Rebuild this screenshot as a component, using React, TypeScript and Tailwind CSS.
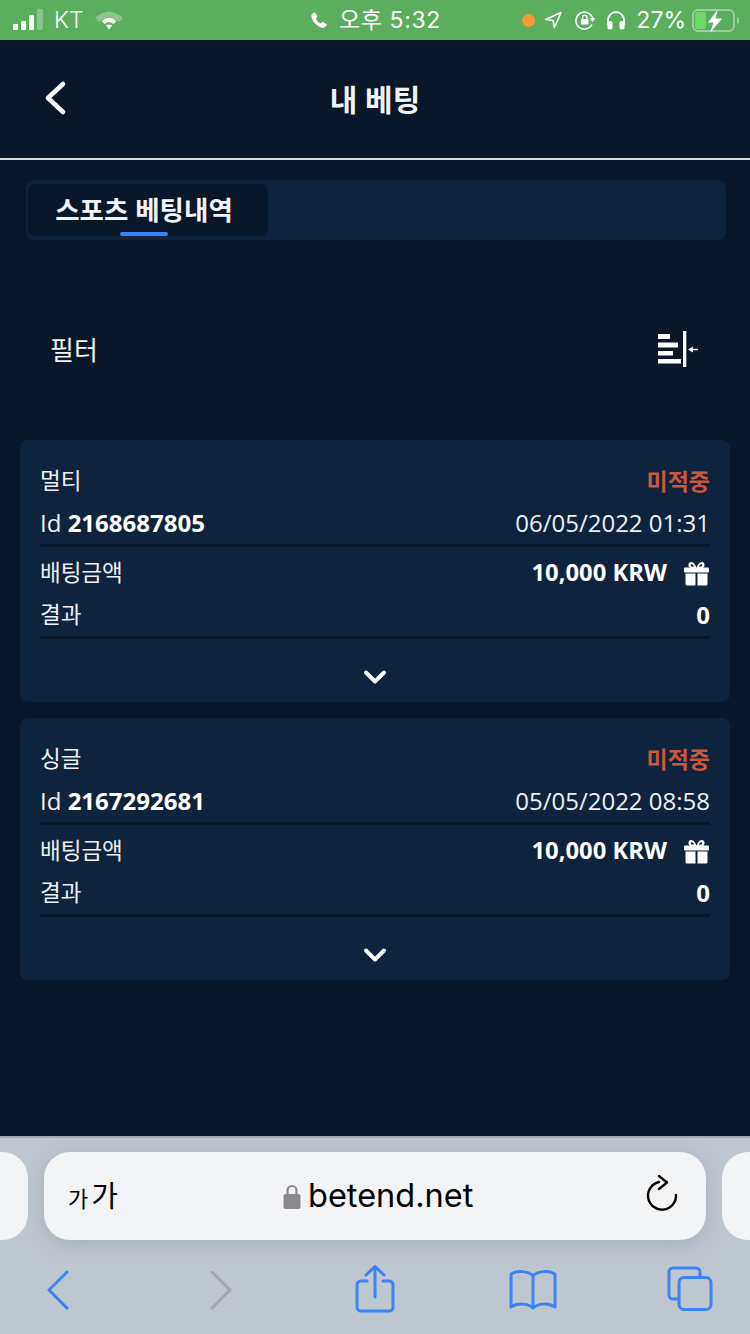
import { ChevronDown } from "lucide-react";

const sans = "font-['Open_Sans','Noto_Sans_CJK_KR',sans-serif]";
const ios = "font-['Inter','Noto_Sans_CJK_KR',sans-serif]";

const bets = [
  { type: "멀티", id: "2168687805", date: "06/05/2022 01:31" },
  { type: "싱글", id: "2167292681", date: "05/05/2022 08:58" },
];

function StatusBar() {
  return (
    <div className={`${ios} h-10 bg-[#5aae5c] flex items-center text-white shrink-0 relative`}>
      <div className="flex items-end gap-[3px] ml-[13px] mb-[1px]">
        <div className="w-[5px] h-[6px] bg-white rounded-[1px]" />
        <div className="w-[5px] h-[9px] bg-white rounded-[1px]" />
        <div className="w-[5px] h-[15px] bg-white rounded-[1px]" />
        <div className="w-[6px] h-[21px] bg-white/30 rounded-[2px]" />
      </div>
      <span className="ml-[11px] text-[23px] leading-none font-light">KT</span>
      <svg width="30" height="22" viewBox="0 0 30 22" className="ml-[10px]">
        <path d="M1 9 Q15 -4 29 9 L25 13 Q15 4 5 13 Z" fill="#fff" fillOpacity="0.3" />
        <path d="M7.5 12 Q15 5.5 22.500 12 L19.500 15 Q15 11.500 10.500 15 Z" fill="#fff" />
        <path d="M12 16.500 Q15 14.500 18 16.500 L15 20.500 Z" fill="#fff" />
      </svg>

      <div className="absolute left-[310px] top-0 h-10 flex items-center">
        <svg width="18" height="18" viewBox="0 0 24 24" fill="#fff">
          <path d="M6.600 1.500 L10 7.500 L7.800 10 C9 13 11 15.200 14.200 16.500 L16.800 14.200 L22.500 17.800 C21.500 21 19.500 22.800 17 22.500 C9 21 3 14 1.800 7 C1.500 4.500 3.500 2.300 6.600 1.500 Z" />
        </svg>
        <span className="ml-[11px] text-[23px] leading-none tracking-[0.6px]">오후 5:32</span>
      </div>

      <div className="absolute right-0 top-0 h-10 flex items-center">
        <div className="w-[13px] h-[13px] rounded-full bg-[#f29b38]" />
        <svg width="18" height="18" viewBox="0 0 18 18" fill="none" stroke="#fff" strokeWidth="1.500" strokeLinejoin="round" className="ml-[9px]">
          <path d="M17 1.500 L1.500 8.500 L9 9.500 L10.500 16.500 Z" />
        </svg>
        <svg width="22" height="22" viewBox="0 0 22 22" fill="none" className="ml-[12px]">
          <path d="M18.500 9 A8.500 8.500 0 1 0 18 15.500" stroke="#fff" strokeWidth="1.500" />
          <path d="M15.500 9 L21.500 9 L18.500 13 Z" fill="#fff" />
          <rect x="7" y="10" width="7.500" height="5.500" rx="1" fill="#fff" />
          <path d="M8.500 10 V8.500 A2.200 2.200 0 0 1 13 8.500 V10" stroke="#fff" strokeWidth="1.300" />
        </svg>
        <svg width="20" height="20" viewBox="0 0 20 20" fill="none" className="ml-[10px]">
          <path d="M2 15 V10 A8 8 0 0 1 18 10 V15" stroke="#fff" strokeWidth="1.800" />
          <rect x="1.500" y="11" width="5" height="8.500" rx="2" fill="#fff" />
          <rect x="13.500" y="11" width="5" height="8.500" rx="2" fill="#fff" />
        </svg>
        <span className="ml-[10px] text-[23px] leading-none">27%</span>
        <div className="relative ml-[6px] mr-[11px] w-[47px] h-[23px]">
          <div className="w-[43px] h-full rounded-[6px] border-2 border-white/40 p-[1px]">
            <div className="w-[11px] h-full rounded-[2px] bg-[#6fd668]" />
          </div>
          <div className="absolute right-0 top-[8px] w-[2px] h-[7px] bg-white/40 rounded-r-sm" />
          <svg width="16" height="24" viewBox="0 0 16 24" className="absolute left-[15px] top-0">
            <path d="M11 0 L1 13.500 L6.500 13.500 L3 24 L15 9.500 L8.500 9.500 Z" fill="#fff" />
          </svg>
        </div>
      </div>
    </div>
  );
}

function Header() {
  return (
    <div className="h-[120px] border-b-2 border-[#d9dadb] flex items-center justify-center relative shrink-0">
      <svg width="24" height="36" viewBox="0 0 24 36" fill="none" className="absolute left-[43px] top-[40px]">
        <path d="M20 4 L5 18 L20 32" stroke="#fff" strokeWidth="4.500" strokeLinecap="round" strokeLinejoin="round" />
      </svg>
      <h1 className={`${sans} text-[30px] leading-none font-bold text-[#f2f3f5] mt-[2px]`}>내 베팅</h1>
    </div>
  );
}

function Tabs() {
  return (
    <div className="mt-5 ml-[26px] mr-[24px] h-[60px] rounded-lg bg-[#0f233d] px-[2px] py-1 flex">
      <div className="w-[240px] h-full rounded-md bg-[#0a1729] relative flex justify-center pt-[7px]">
        <span className={`${sans} text-[26.500px] leading-[38px] font-bold text-[#f2f3f5] ml-[-8px]`}>스포츠 베팅내역</span>
        <div className="absolute left-[92px] bottom-0 w-12 h-1 rounded-full bg-[#3b82f6]" />
      </div>
    </div>
  );
}

function FilterRow() {
  return (
    <div className="h-[200px] flex items-center justify-between pt-5 pl-[50px] pr-[52px] shrink-0">
      <span className={`${sans} text-[26px] leading-none text-[#f2f3f5]`}>필터</span>
      <svg width="40" height="38" viewBox="0 0 40 38" fill="#fff">
        <rect x="0" y="3" width="12" height="5" rx="0.500" />
        <rect x="0" y="11.500" width="20" height="5" rx="0.500" />
        <rect x="0" y="20" width="15" height="4.500" rx="0.500" />
        <rect x="0" y="28" width="23" height="4.500" rx="0.500" />
        <rect x="25" y="0" width="3.300" height="36" />
        <path d="M30 18.500 L35 15.500 V17.700 H40 V19.300 H35 V21.500 Z" />
      </svg>
    </div>
  );
}

function GiftIcon() {
  return (
    <svg width="25" height="25" viewBox="0 0 25 25" fill="#fff">
      <path d="M7.500 7.500 C3.500 7 3.500 1 7 1 C10 1 12 4.500 12.500 7.500 C13 4.500 15 1 18 1 C21.500 1 21.500 7 17.500 7.500 Z M8 5.500 H10 C9.500 3.500 7 2.500 6.800 4.200 C6.700 5 7.300 5.500 8 5.500 Z M15 5.500 H17 C17.700 5.500 18.300 5 18.200 4.200 C18 2.500 15.500 3.500 15 5.500 Z" fillRule="evenodd" />
      <rect x="0" y="6.500" width="25" height="5" rx="1" />
      <path d="M1.500 12.500 H11.500 V24.500 H3 A1.500 1.500 0 0 1 1.500 23 Z" />
      <path d="M13.500 12.500 H23.500 V23 A1.500 1.500 0 0 1 22 24.500 H13.500 Z" />
    </svg>
  );
}

function BetCard({ type, id, date }: { type: string; id: string; date: string }) {
  return (
    <div className={`${sans} bg-[#0f233d] rounded-lg h-[262px] px-5 pt-5 text-[#eef0f2] text-[22.500px]`}>
      <div className="flex justify-between items-center h-[42px]">
        <span>{type}</span>
        <span className="font-bold text-[#c8583f] text-[23px]">미적중</span>
      </div>
      <div className="flex justify-between items-center h-[42px] border-b-[3px] border-[#0a1729] box-content text-[24px]">
        <span>
          Id <b className="font-bold text-white">{id}</b>
        </span>
        <span>{date}</span>
      </div>
      <div className="flex justify-between items-center h-[42px] mt-[5px]">
        <span>배팅금액</span>
        <span className="flex items-center gap-[17px] font-bold text-white text-[23.800px]">
          10,000 KRW
          <span className="mr-[1px]">
            <GiftIcon />
          </span>
        </span>
      </div>
      <div className="flex justify-between items-center h-[42px] border-b-[3px] border-[#0a1729] box-content">
        <span>결과</span>
        <span className="font-bold text-white text-[24px]">0</span>
      </div>
      <div className="flex justify-center pt-[20px]">
        <ChevronDown size={36} strokeWidth={2.6} color="#ffffff" />
      </div>
    </div>
  );
}

function SafariBar() {
  return (
    <div className={`${ios} h-[198px] bg-[#bec6cf] border-t-2 border-[#a5abb3] shrink-0 mt-auto flex flex-col`}>
      <div className="flex justify-between gap-4 mt-[14px] h-[88px]">
        <div className="w-[28px] rounded-r-[26px] bg-[#f3f4f6]" />
        <div className="flex-1 rounded-[26px] bg-[#f3f4f6] flex items-center relative shadow-[0_4px_20px_rgba(100,110,120,0.25)]">
          <span className="ml-[24px] flex items-baseline gap-[3px] text-black leading-none">
            <span className="text-[22px]">가</span>
            <span className="text-[29px]">가</span>
          </span>
          <div className="absolute left-[239px] top-[28px] flex items-center gap-[7px]">
            <svg width="18" height="27" viewBox="0 0 18 27" fill="none">
              <path d="M4.500 12 V7.500 A4.500 4.500 0 0 1 13.500 7.500 V12" stroke="#8a8a8e" strokeWidth="2.200" />
              <rect x="0.500" y="11" width="17" height="15" rx="2.500" fill="#8a8a8e" />
            </svg>
            <span className="text-[32.500px] leading-none text-black">betend.net</span>
          </div>
          <svg width="32" height="38" viewBox="0 0 32 38" fill="none" stroke="#000" strokeWidth="2.400" strokeLinecap="round" strokeLinejoin="round" className="absolute right-[28px] top-[23px]">
            <path d="M13 7 A14 14 0 1 0 30 20" />
            <path d="M13 1 L21 7.500 L13 14" />
          </svg>
        </div>
        <div className="w-[28px] rounded-l-[26px] bg-[#f3f4f6]" />
      </div>
      {/* toolbar buttons */}
      <div className="flex items-start pl-[46px] pt-[26px]">
        <svg width="24" height="40" viewBox="0 0 24 40" fill="none" stroke="#3b82f6" strokeWidth="3" strokeLinecap="round" strokeLinejoin="round" className="mt-[4px]">
          <path d="M21 2 L3 20 L21 38" />
        </svg>
        <svg width="24" height="40" viewBox="0 0 24 40" fill="none" stroke="#a3a8ae" strokeWidth="3" strokeLinecap="round" strokeLinejoin="round" className="mt-[4px] ml-[139px]">
          <path d="M3 2 L21 20 L3 38" />
        </svg>
        <svg width="40" height="48" viewBox="0 0 40 48" fill="none" stroke="#3b82f6" strokeWidth="3" strokeLinecap="round" strokeLinejoin="round" className="mt-[-1px] ml-[122px]">
          <path d="M12 16 H6 A4 4 0 0 0 2 20 V42 A4 4 0 0 0 6 46 H34 A4 4 0 0 0 38 42 V20 A4 4 0 0 0 34 16 H28" />
          <path d="M20 32 V2 M11 10 L20 1.500 L29 10" />
        </svg>
        <svg width="48" height="40" viewBox="0 0 48 40" fill="none" stroke="#3b82f6" strokeWidth="3" strokeLinecap="round" strokeLinejoin="round" className="mt-[4px] ml-[114px]">
          <path d="M24 6 C20 1 8 0 2 4 V37 C8 33 19 33 24 38 C29 33 40 33 46 37 V4 C40 0 28 1 24 6 Z M24 6 V38" />
        </svg>
        <svg width="46" height="46" viewBox="0 0 46 46" fill="none" stroke="#3b82f6" strokeWidth="3" className="ml-[110px]">
          <path d="M11 33 H6 A4 4 0 0 1 2 29 V6 A4 4 0 0 1 6 2 H29 A4 4 0 0 1 33 6 V11" />
          <rect x="12" y="11.500" width="32" height="32" rx="5" />
        </svg>
      </div>
    </div>
  );
}

export default function App() {
  return (
    <div className="w-[750px] h-[1334px] bg-[#0a1729] flex flex-col overflow-hidden">
      <StatusBar />
      <Header />
      <Tabs />
      <FilterRow />
      <div className="px-5 flex flex-col gap-4">
        {bets.map((b) => (
          <BetCard key={b.id} {...b} />
        ))}
      </div>
      <SafariBar />
    </div>
  );
}
